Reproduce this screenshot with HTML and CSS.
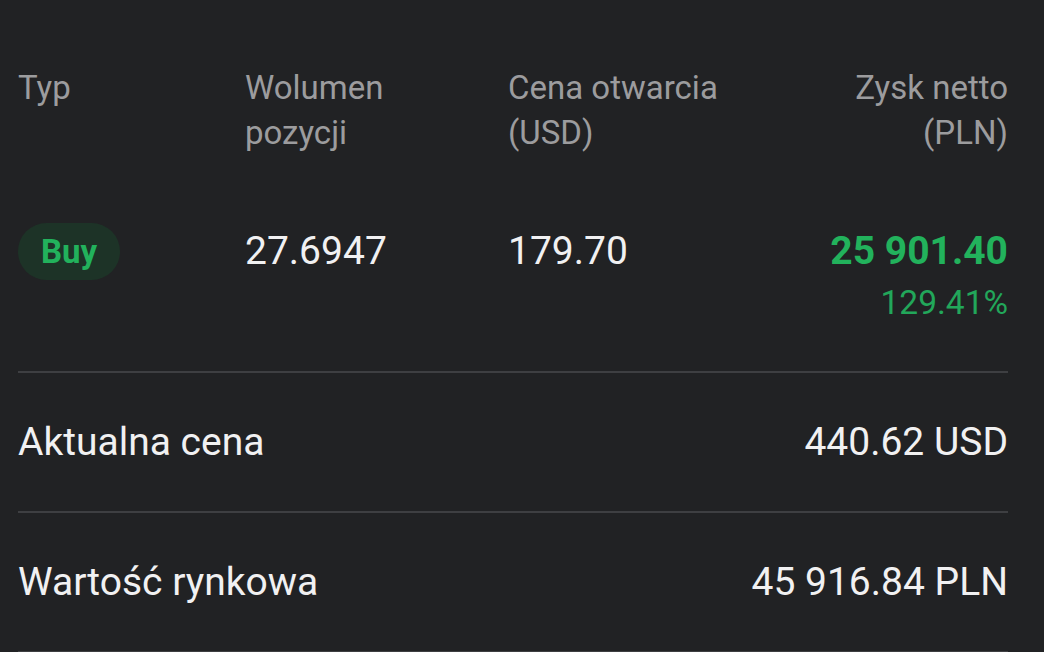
FILE: index.html
```html
<!DOCTYPE html>
<html lang="pl">
<head>
<meta charset="utf-8">
<title>Pozycja</title>
<link rel="stylesheet" href="styles.css">
</head>
<body>
<main class="position">
  <section class="table">
    <div class="head">
      <div class="cell">Typ</div>
      <div class="cell">Wolumen<br>pozycji</div>
      <div class="cell">Cena otwarcia<br>(USD)</div>
      <div class="cell right">Zysk netto<br>(PLN)</div>
    </div>
    <div class="data">
      <div class="cell"><span class="pill">Buy</span></div>
      <div class="cell num">27.6947</div>
      <div class="cell num">179.70</div>
      <div class="cell right">
        <div class="num profit">25 901.40</div>
        <div class="pct">129.41%</div>
      </div>
    </div>
  </section>
  <div class="row">
    <span>Aktualna cena</span>
    <span>440.62 USD</span>
  </div>
  <div class="row">
    <span>Wartość rynkowa</span>
    <span>45 916.84 PLN</span>
  </div>
</main>
</body>
</html>
```

FILE: styles.css
```css
html, body {
  margin: 0;
  padding: 0;
  background: #212224;
}

body {
  font-family: Roboto, "Noto Sans", sans-serif;
  color: #f1f1f2;
  overflow: hidden;
}

.position {
  padding: 0 36px 0 18px;
}

.table {
  padding-top: 65px;
  padding-bottom: 45px;
  border-bottom: 2px solid #3e3f42;
}

.head,
.data {
  display: grid;
  grid-template-columns: 227px 263px 1fr auto;
  align-items: start;
}

.head {
  font-size: 33px;
  line-height: 45px;
  color: #9c9c9e;
}

.data {
  margin-top: 68px;
}

.right {
  text-align: right;
}

.pill {
  display: inline-flex;
  align-items: center;
  justify-content: center;
  width: 102px;
  height: 57px;
  border-radius: 29px;
  background: #1d3327;
  color: #22b25c;
  font-size: 33px;
  font-weight: 700;
}

.num {
  font-size: 39px;
  line-height: 57px;
}

.profit {
  font-weight: 700;
  color: #22b25c;
}

.pct {
  font-size: 33.5px;
  line-height: 46px;
  color: #22a75a;
}

.row {
  display: flex;
  justify-content: space-between;
  align-items: center;
  height: 138px;
  font-size: 39px;
  border-bottom: 2px solid #3e3f42;
}
```
